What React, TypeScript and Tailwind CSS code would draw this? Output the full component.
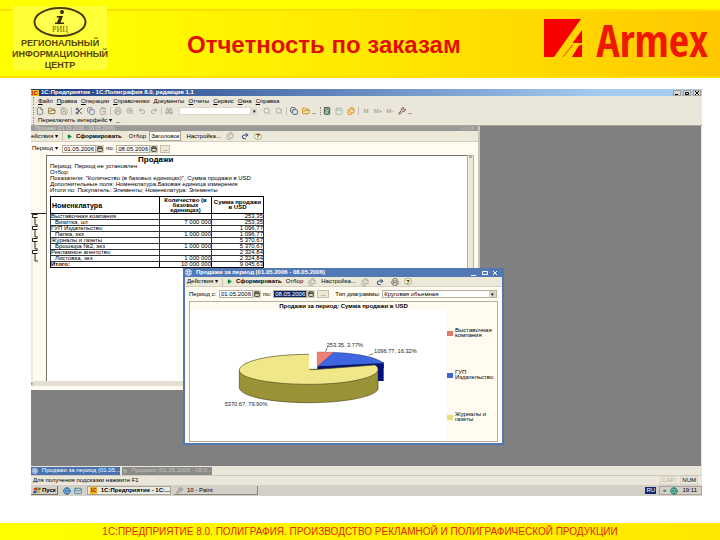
import type { ReactNode } from "react";
import {
  Binoculars,
  Calculator,
  Calendar,
  ClipboardPaste,
  Copy,
  File,
  Files,
  FolderOpen,
  Globe,
  Grid3x3,
  Mail,
  Play,
  Printer,
  Redo2,
  Save,
  Scissors,
  Search,
  Undo2,
  Wrench,
  ZoomIn,
  type LucideIcon,
} from "lucide-react";

const menuItems = [
  "Файл",
  "Правка",
  "Операции",
  "Справочники",
  "Документы",
  "Отчеты",
  "Сервис",
  "Окна",
  "Справка",
];

const rows = [
  { name: "Выставочная компания", qty: "", sum: "253,35" },
  { name: "Визитка, шт", qty: "7 000 000", sum: "253,35", child: true },
  { name: "ГУП Издательство", qty: "", sum: "1 096,77" },
  { name: "Папка, экз", qty: "1 000 000", sum: "1 096,77", child: true },
  { name: "Журналы и газеты", qty: "", sum: "5 370,67" },
  { name: "Брошюра №2, экз", qty: "1 000 000", sum: "5 370,67", child: true },
  { name: "Рекламное агентство", qty: "", sum: "2 324,84" },
  { name: "Листовка, экз", qty: "1 000 000", sum: "2 324,84", child: true },
];

const legend = [
  { label: "Выставочная компания", color: "bg-[#e0796f]" },
  { label: "ГУП Издательство", color: "bg-[#4063d0]" },
  { label: "Журналы и газеты", color: "bg-[#e6de80]" },
];

function Tool({
  icon: Icon,
  label,
  color = "text-[#b0aca0]",
}: {
  icon: LucideIcon;
  label: string;
  color?: string;
}) {
  return (
    <button aria-label={label} className={`flex w-3 justify-center ${color}`}>
      <Icon size={8} strokeWidth={3} />
    </button>
  );
}

function Sep() {
  return <span className="mx-px h-2 w-px bg-[#c4bfb0]" />;
}

function Grip() {
  return <span className="h-2 w-0 border-l border-dotted border-[#8f8b80]" />;
}

function WindowButton({ label, children }: { label: string; children: ReactNode }) {
  return (
    <button
      aria-label={label}
      className="flex h-[6px] w-2 items-center justify-center border border-[#a5a195] bg-[#dcd8cc] text-black"
    >
      <svg viewBox="0 0 6 4" className="h-1 w-[6px]" fill="none" stroke="currentColor">
        {children}
      </svg>
    </button>
  );
}

function DateInput({
  label,
  value,
  selected,
}: {
  label: string;
  value: string;
  selected?: boolean;
}) {
  return (
    <div className="flex h-2 items-center">
      <input
        aria-label={label}
        defaultValue={value}
        className={`h-2 w-[34px] border border-[#b5b09f] pl-px text-[6px] leading-[6px] ${
          selected ? "bg-[#0a246a] text-white" : "bg-white"
        }`}
      />
      <button
        aria-label="Календарь"
        className="flex h-2 w-2 items-center justify-center bg-[#d5d0c0] text-[#55503f]"
      >
        <Calendar size={6} strokeWidth={4} />
      </button>
    </div>
  );
}

function Help() {
  return (
    <button
      aria-label="Помощь"
      className="flex h-[7px] w-2 items-center justify-center rounded-full border border-[#a9a58a] bg-[#ffffd8] text-[6px] leading-[6px] font-bold"
    >
      ?
    </button>
  );
}

function RunButton() {
  return (
    <button className="flex items-center gap-1 font-bold">
      <Play size={5} className="fill-green-700 text-green-700" />
      Сформировать
    </button>
  );
}

function Header() {
  return (
    <header className="bg-[#ff0]">
      <div className="h-[9px]" />
      <div className="flex h-[69px] border-y-2 border-y-[#fd0] bg-linear-to-r from-[#ff0] from-10% via-[#ffe600] via-55% to-[#ffc800]">
        <div className="-mt-[5px] ml-[13px] flex h-16 w-[94px] shrink-0 flex-col items-center bg-[#ffff38]">
          <svg viewBox="0 0 54 32" className="h-8 w-[54px] shrink-0" aria-hidden="true">
            <ellipse cx="27" cy="16" rx="25.5" ry="14" fill="#ffff50" stroke="#4c3b00" strokeWidth="2" />
            {/* the italic i is drawn, it is part of the mark */}
            <circle cx="29" cy="6" r="2" fill="#3a2d00" />
            <path d="M24 10H30L27.500 16.500H31V18H22V16.500H24L26 11.500H23.500Z" fill="#3a2d00" />
            <text
              x="27"
              y="26"
              textAnchor="middle"
              fontSize="8"
              fontFamily="Liberation Serif, serif"
              fill="#7a6400"
            >
              РИЦ
            </text>
          </svg>
          <p className="text-center text-[9px] leading-[11px] font-bold whitespace-nowrap text-[#5a4600]">
            РЕГИОНАЛЬНЫЙ
            <br />
            ИНФОРМАЦИОННЫЙ
            <br />
            ЦЕНТР
          </p>
        </div>
        <h1 className="flex-1 pt-5 pl-20 text-[24px] leading-7 font-bold whitespace-nowrap text-[#e01000]">
          Отчетность по заказам
        </h1>
        <div className="mr-3 flex gap-[14px] pt-2">
          <svg viewBox="0 0 38 38" className="size-[38px]" aria-hidden="true">
            <path d="M0 0H37L10 38H0Z" fill="#f60000" />
            <path d="M38 11V24H28.5Z" fill="#f60000" />
            <path d="M38 25.5V38H28L34.5 27Z" fill="#f60000" />
            <path d="M19 38L28.5 26" stroke="#e64000" strokeWidth="1" />
          </svg>
          <span className="font-['Open_Sans_Condensed','Roboto_Condensed',Lato,sans-serif] text-[44px] leading-[42px] font-light text-[#f01800]">
            Armex
          </span>
        </div>
      </div>
    </header>
  );
}

function ReportWindow() {
  return (
    <section className="absolute top-0 left-0 flex h-[264px] w-[449px] flex-col border-r-2 border-[#c9c5b8] bg-[#fffbf0]">
      <div className="flex h-[5px] items-center justify-between bg-[#9a9a98] px-1 text-[5px] leading-[5px] text-[#d8d4c8]">
        <h2>Продажи (01.05.2006 - 08.05.2006)</h2>
        <span>– □ ×</span>
      </div>
      <div className="flex h-[11px] items-center gap-[3px] border-b border-[#d5d0c0] bg-[#ece9d8]">
        <button>ействия ▾</button>
        <Sep />
        <RunButton />
        <button className="ml-1">Отбор</button>
        <button className="border border-[#aca899] bg-[#fffdf5] px-px leading-2">Заголовок</button>
        <button className="ml-[2px]">Настройка...</button>
        <Tool icon={Files} label="Сохранить значения" />
        <Tool icon={Redo2} label="Восстановить значения" color="text-[#28407c]" />
        <Help />
      </div>
      <div className="flex h-[13px] items-center gap-[2px] pl-px">
        <button className="w-[28px] text-left whitespace-nowrap">Период ▾</button>
        <DateInput label="Начало периода" value="01.05.2006" />
        по:
        <DateInput label="Конец периода" value="08.05.2006" />
        <button className="h-2 w-[10px] border border-[#c4bfb0] bg-[#ece9d8] leading-1">...</button>
      </div>
      <div className="flex flex-1">
        {/* outline brackets for the table groups */}
        <svg viewBox="0 0 15 225" className="h-[225px] w-[15px] shrink-0" fill="none" stroke="#222">
          <path d="M0 58.5H15" />
          <path d="M1 59v166" stroke="#ddd6c0" />
          {[59, 71, 83, 95].map((y) => (
            <path key={y} d={`M1.500 ${y + 0.5}h5M1.500 ${y + 3.5}h5M1.500 ${y + 0.5}v3M4 ${y + 4}v7h3`} />
          ))}
        </svg>
        <div className="flex-1 border-t border-l border-[#77746a] bg-white pl-[3px]">
          <h3 className="pl-[88px] text-[8px] leading-[7px] font-bold">Продажи</h3>
          <p className="leading-[6px]">
            Период: Период не установлен
            <br />
            Отбор:
            <br />
            Показатели: "Количество (в базовых единицах)", Сумма продажи в USD
            <br />
            Дополнительные поля: Номенклатура.Базовая единица измерения
            <br />
            Итоги по: Покупатель: Элементы; Номенклатура: Элементы
          </p>
          <table className="mt-[3px] w-[214px] table-fixed border-collapse border border-black leading-[5px]">
            <thead>
              <tr className="h-[17px]">
                <th className="w-[109px] border border-black p-0 pl-px text-left text-[7px]">Номенклатура</th>
                <th className="w-[52px] border border-black p-0">
                  Количество (в
                  <br />
                  базовых
                  <br />
                  единицах)
                </th>
                <th className="border border-black p-0">
                  Сумма продажи
                  <br />в USD
                </th>
              </tr>
            </thead>
            <tbody>
              {rows.map((row) => (
                <tr key={row.name} className="h-[6px]">
                  <td className={`border border-[#333] p-0 ${row.child ? "pl-1" : ""}`}>{row.name}</td>
                  <td className="border border-[#333] p-0 text-right">{row.qty}</td>
                  <td className="border border-[#333] p-0 text-right">{row.sum}</td>
                </tr>
              ))}
              <tr className="h-[6px] font-bold">
                <td className="border border-black p-0">Итого:</td>
                <td className="border border-black p-0 text-right font-normal">10 000 000</td>
                <td className="border border-black p-0 text-right font-normal">9 045,63</td>
              </tr>
            </tbody>
          </table>
        </div>
        <div className="mr-1 w-[7px] border border-[#b5b09f] bg-[#ece9d8] text-center text-[5px] leading-[5px]">
          ^
        </div>
      </div>
      <div className="mb-1 h-[5px] bg-[#e4dfd0] text-[5px] leading-[5px]">‹</div>
    </section>
  );
}

function PieChart() {
  return (
    <svg viewBox="30 -93 768 393" className="h-[131px] w-64 shrink-0 bg-white">
      {/* yellow body */}
      <path
        d="M178 88V142C186 168 280 185 387 185C500 185 585 166 594 145V82Z"
        fill="#9a9236"
        stroke="#4d4920"
        strokeWidth="2"
      />
      <path d="M594 68H611V120H594Z" fill="#00107c" />
      <path d="M412 76L611 64V82L412 86Z" fill="#00107c" />
      <path d="M460 34C530 37 590 48 611 67L412 76Z" fill="#3d66e0" stroke="#123" strokeWidth="1" />
      <path d="M412 33L460 34L412 76Z" fill="#f08074" stroke="#833" strokeWidth="1" />
      <path
        d="M387 40C260 40 178 63 178 88C178 112 270 130 387 130C505 130 594 110 594 85C594 79 590 75 584 72L400 86L387 84Z"
        fill="#f0e68a"
      />
      <path
        d="M387 40C260 40 178 63 178 88C178 112 270 130 387 130C505 130 594 110 594 85C594 79 590 75 584 72L400 86H387"
        fill="none"
        stroke="#55501f"
        strokeWidth="2"
      />
      <path d="M436 32L442 20M566 43L580 38" stroke="#333" strokeWidth="2" />
      <g fontSize="17" fill="#222">
        <text x="440" y="19">253.35, 3.77%</text>
        <text x="582" y="37">1096.77, 16.32%</text>
        <text x="134" y="195">5370.67, 79.90%</text>
      </g>
    </svg>
  );
}

function ChartWindow() {
  return (
    <section className="absolute top-[142px] left-[152px] flex h-[177px] w-[321px] flex-col border-x-2 border-b-2 border-[#5376b4] bg-[#fffbf0]">
      <div className="flex h-[9px] shrink-0 items-center bg-[#5278b5] pr-1 text-white">
        <Grid3x3 size={7} className="mr-1" />
        <h2 className="flex-1 font-bold">Продажи за период (01.05.2006 - 08.05.2006)</h2>
        <svg viewBox="0 0 28 6" className="h-[6px] w-7" fill="none" stroke="white" aria-hidden="true">
          <path d="M1 5.500H6M12.500 1.500H17.500V4.500H12.500ZM23 1L27 5M27 1L23 5" />
        </svg>
      </div>
      <div className="flex h-[10px] shrink-0 items-center gap-[3px] border-b border-[#d5d0c0] bg-[#ece9d8] pl-[2px]">
        <button>Действия ▾</button>
        <Sep />
        <RunButton />
        <button className="ml-px">Отбор</button>
        <Tool icon={Files} label="Легенда" />
        <button>Настройка...</button>
        <Tool icon={Files} label="Сохранить значения" />
        <Tool icon={Redo2} label="Восстановить значения" color="text-[#28407c]" />
        <Tool icon={Printer} label="Печать" color="text-[#807c70]" />
        <Help />
      </div>
      <div className="flex h-[14px] shrink-0 items-center gap-[2px] pr-[5px] pl-1">
        <span className="w-7">Период с:</span>
        <DateInput label="Период с" value="01.05.2006" />
        по:
        <DateInput label="Период по" value="08.05.2006" selected />
        <button className="h-2 w-3 border border-[#c4bfb0] bg-[#ece9d8] leading-1">...</button>
        <label htmlFor="chart-type" className="ml-1 whitespace-nowrap">
          Тип диаграммы:
        </label>
        <div className="flex h-2 flex-1 border border-[#b5b09f] bg-white">
          <select id="chart-type" className="min-w-0 flex-1 appearance-none px-px text-[6px] leading-[6px]">
            <option>Круговая объемная</option>
          </select>
          <span className="w-[7px] bg-[#d9d4c4] text-center text-[5px] leading-[6px]">▾</span>
        </div>
      </div>
      <div className="mx-1 mb-1 flex-1 border border-[#b5b09f]">
        <h3 className="text-center leading-2 font-bold">Продажи за период: Сумма продажи в USD</h3>
        <div className="flex">
          <PieChart />
          <ul className="flex flex-col gap-8 pt-[18px] pl-px">
            {legend.map((item) => (
              <li key={item.label} className="flex items-center gap-[2px] leading-[5px]">
                <span className={`h-[5px] w-[6px] shrink-0 ${item.color}`} />
                <span className="w-[41px]">{item.label}</span>
              </li>
            ))}
          </ul>
        </div>
      </div>
    </section>
  );
}

function Workspace() {
  return (
    <main className="mt-[11px] mr-[18px] ml-[31px] bg-[#ebe6da] text-[6px] leading-[7px]">
      <div className="flex h-[7px] items-center gap-[2px] bg-linear-to-r from-[#1c3c80] to-[#a6caf0] to-85% pr-px text-white">
        <span className="h-[6px] w-2 bg-[#f0b818] text-[5px] leading-[6px] font-bold text-[#b01010]">1С</span>
        <h2 className="flex-1 font-bold">1С:Предприятие - 1С:Полиграфия 8.0, редакция 1.1</h2>
        <WindowButton label="Свернуть">
          <path d="M1 3.500H4" />
        </WindowButton>
        <WindowButton label="Восстановить">
          <path d="M1.500 1.500H4.500V3.500H1.500Z" />
        </WindowButton>
        <WindowButton label="Закрыть">
          <path d="M1 0L5 4M5 0L1 4" />
        </WindowButton>
      </div>
      <nav className="flex h-[10px] items-center gap-1 pl-[2px]">
        <Grip />
        {menuItems.map((item) => (
          <button key={item} className="first-letter:underline">
            {item}
          </button>
        ))}
      </nav>
      <div className="flex h-[10px] items-center pl-[2px]">
        <Grip />
        <Tool icon={File} label="Новый" color="text-[#8c8a84]" />
        <Tool icon={FolderOpen} label="Открыть" color="text-[#8f7730]" />
        <Tool icon={Save} label="Сохранить" />
        <Sep />
        <Tool icon={Scissors} label="Вырезать" color="text-[#555c70]" />
        <Tool icon={Copy} label="Копировать" color="text-[#8087a0]" />
        <Tool icon={ClipboardPaste} label="Вставить" />
        <Sep />
        <Tool icon={Printer} label="Печать" />
        <Tool icon={ZoomIn} label="Просмотр" />
        <Tool icon={Undo2} label="Отменить" />
        <Tool icon={Redo2} label="Вернуть" />
        <Sep />
        <Tool icon={Binoculars} label="Найти" />
        <input aria-label="Поиск" className="ml-1 h-2 w-[72px] border border-[#dcd8c8] bg-white" />
        <button aria-label="История поиска" className="mr-1 w-[6px] bg-[#dedacc] text-[5px]">
          ▾
        </button>
        <Tool icon={Search} label="Найти далее" />
        <Tool icon={Search} label="Найти назад" />
        <Sep />
        <Tool icon={Copy} label="Окна" color="text-[#56627c]" />
        <Tool icon={FolderOpen} label="Справка" color="text-[#c89000]" />
        <span className="w-2">_</span>
        <Grip />
        <Tool icon={Calculator} label="Калькулятор" color="text-[#2c5a4c]" />
        <Tool icon={Calendar} label="Календарь" color="text-[#a8c4b8]" />
        <Tool icon={Files} label="Табло" color="text-[#d89a10]" />
        <Sep />
        <button className="w-3 text-[#908c80]">M</button>
        <button className="w-3 text-[#908c80]">M+</button>
        <button className="w-3 text-[#908c80]">M-</button>
        <Tool icon={Wrench} label="Сервис" color="text-[#7a5a40]" />
        <span>_</span>
      </div>
      <div className="flex h-[10px] items-center gap-1 border-b border-[#aaa698] pl-[2px]">
        <Grip />
        <button>Переключить интерфейс ▾</button>
        <span>_</span>
      </div>
      <div className="relative mr-px h-[340px] overflow-hidden bg-[#808080]">
        <ReportWindow />
        <ChartWindow />
      </div>
      <div className="flex h-[9px] items-center gap-[2px]">
        <button className="flex h-2 w-[89px] items-center gap-1 bg-[#4a72b0] pl-px whitespace-nowrap text-white">
          <Grid3x3 size={6} />
          Продажи за период (01.05...
        </button>
        <button className="flex h-2 w-[90px] items-center gap-1 bg-[#8a8a88] pl-px whitespace-nowrap text-[#c4c2ba]">
          <Grid3x3 size={6} />
          Продажи (01.05.2006 - 08.0...
        </button>
      </div>
      <div className="flex h-[10px] items-center gap-1 border-t border-[#d0cbbd] pr-1 pl-[2px]">
        <span className="flex-1">Для получения подсказки нажмите F1</span>
        <span className="border border-[#dad5c6] px-px text-[#b0ac9e]">CAP</span>
        <span className="border border-[#dad5c6] px-px">NUM</span>
      </div>
      <div className="flex h-[11px] items-center gap-[3px] bg-[#d4d0c8]">
        <button className="flex h-[9px] w-[27px] items-center gap-px border-r border-b border-[#77746a] pl-[2px] font-bold">
          <svg viewBox="0 0 8 7" className="h-[7px] w-2" aria-hidden="true">
            <path d="M1 1L4 0.500V3L0.500 3.500Z" fill="#d04020" />
            <path d="M4.500 0.500L8 1L7 3.500L4.200 3Z" fill="#4a9030" />
            <path d="M0.500 4L4 3.500L3.500 6L0 6.500Z" fill="#3060b0" />
            <path d="M4.300 3.500L7 4L6.500 6.500L3.800 6Z" fill="#e0b020" />
          </svg>
          Пуск
        </button>
        <Tool icon={Globe} label="Браузер" color="text-[#2878b8]" />
        <span className="-ml-1 flex">
          <Tool icon={Mail} label="Почта" color="text-[#4a8cb8]" />
        </span>
        <button className="flex h-[9px] w-[84px] items-center gap-1 border border-[#aaa698] bg-[#ebe8e2] pl-[2px] font-bold whitespace-nowrap">
          <span className="h-[7px] w-2 bg-[#f0b818] text-[5px] leading-[7px] text-[#a01010]">1С</span>
          1С:Предприятие - 1С:...
        </button>
        <button className="flex h-[9px] w-[84px] items-center gap-1 border-r border-b border-[#88857c] pl-[2px]">
          <Wrench size={7} className="text-[#666]" />
          10 - Paint
        </button>
        <span className="flex-1" />
        <span className="bg-[#10286c] px-px text-white">RU</span>
        <div className="flex h-[9px] items-center gap-1 border border-[#aaa698] px-[3px]">
          «
          <Globe size={8} strokeWidth={3} className="text-[#208878]" />
          <span className="pr-px">19:11</span>
        </div>
      </div>
    </main>
  );
}

export default function App() {
  return (
    <div className="flex min-h-screen flex-col bg-white font-['Liberation_Sans',Arial,sans-serif] text-black">
      <Header />
      <Workspace />
      <footer className="mt-auto h-[17px] bg-linear-to-r from-[#ff0] to-[#ffe800] text-center text-[10px] leading-[17px] whitespace-nowrap text-[#e02800]">
        1С:ПРЕДПРИЯТИЕ 8.0. ПОЛИГРАФИЯ. ПРОИЗВОДСТВО РЕКЛАМНОЙ И ПОЛИГРАФИЧЕСКОЙ ПРОДУКЦИИ
      </footer>
    </div>
  );
}
